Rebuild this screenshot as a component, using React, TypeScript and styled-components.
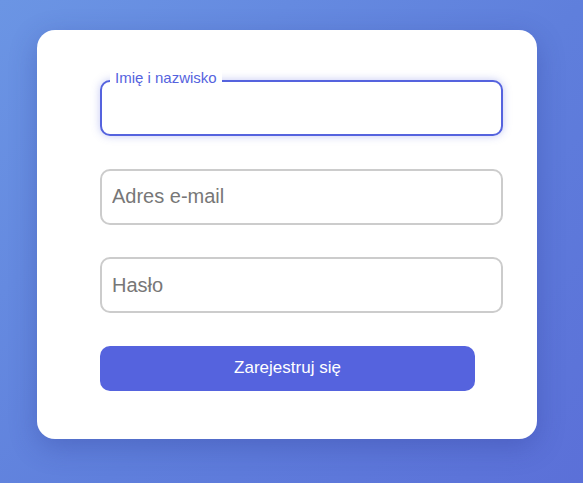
import React from 'react';
import styled, { createGlobalStyle } from 'styled-components';

const GlobalStyle = createGlobalStyle`
  html, body {
    margin: 0;
    height: 100%;
  }
  body {
    font-family: "Liberation Sans", Arial, sans-serif;
    background: linear-gradient(135deg, #6b95e4 0%, #5f7fdc 55%, #5b70d8 100%);
    overflow: hidden;
  }
  #root {
    height: 100%;
  }
`;

const Page = styled.div`
  height: 100%;
  box-sizing: border-box;
  padding: 30px 0 0 37px;
`;

const Card = styled.form`
  width: 500px;
  height: 409px;
  box-sizing: border-box;
  padding: 50px 62px 0 63px;
  background: #fff;
  border-radius: 18px;
  box-shadow: 0 8px 28px rgba(40, 50, 140, 0.3);
  display: flex;
  flex-direction: column;
  gap: 32.5px;
`;

const Field = styled.div`
  position: relative;
  width: 403px;
`;

const Input = styled.input<{ $active?: boolean }>`
  display: block;
  width: 100%;
  height: 56px;
  box-sizing: border-box;
  padding: 0 10px;
  font-family: "Liberation Sans", Arial, sans-serif;
  font-size: 20px;
  color: #333;
  border: 2px solid ${(p) => (p.$active ? '#5563de' : '#cccccc')};
  border-radius: 10px;
  outline: none;
  background: #fff;
  box-shadow: ${(p) => (p.$active ? '0 0 8px rgba(85, 99, 222, 0.35)' : 'none')};

  &::placeholder {
    color: #777;
  }
`;

const FloatLabel = styled.label`
  position: absolute;
  left: 10px;
  top: -11px;
  padding: 0 5px;
  background: #fff;
  color: #5563de;
  font-size: 15px;
  line-height: 17px;
`;

const Submit = styled.button`
  width: 375px;
  height: 45px;
  border: none;
  border-radius: 10px;
  background: #5563de;
  color: #fff;
  font-family: "Liberation Sans", Arial, sans-serif;
  font-size: 17px;
  cursor: pointer;
`;

export default function App() {
  return (
    <>
      <GlobalStyle />
      <Page>
        <Card onSubmit={(e) => e.preventDefault()}>
          <Field>
            <Input $active id="name" type="text" />
            <FloatLabel htmlFor="name">Imię i nazwisko</FloatLabel>
          </Field>
          <Field>
            <Input type="email" placeholder="Adres e-mail" />
          </Field>
          <Field>
            <Input type="password" placeholder="Hasło" />
          </Field>
          <Submit type="submit">Zarejestruj się</Submit>
        </Card>
      </Page>
    </>
  );
}
